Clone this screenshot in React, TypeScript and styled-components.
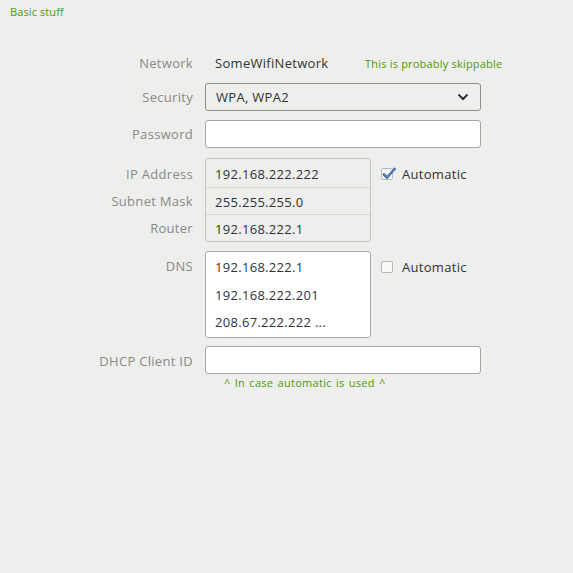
import React from 'react';
import styled, { createGlobalStyle } from 'styled-components';

const GlobalStyle = createGlobalStyle`
  html, body {
    margin: 0;
    padding: 0;
    background: #eeeeec;
  }
  body {
    font-family: "Open Sans", "Noto Sans", sans-serif;
    font-size: 13px;
    letter-spacing: 0.3px;
    color: #2e3436;
  }
`;

const Page = styled.div`
  width: 573px;
  height: 573px;
  background: #eeeeec;
  box-sizing: border-box;
  padding: 5px 10px 0;
`;

const SectionTitle = styled.div`
  font-size: 11px;
  line-height: 14px;
  letter-spacing: 0.1px;
  color: #4e9a06;
`;

const Form = styled.div`
  display: grid;
  grid-template-columns: 183px 276px;
  column-gap: 12px;
  row-gap: 9px;
  margin-top: 33px;
`;

const Label = styled.div<{ $top?: boolean }>`
  color: #888a85;
  text-align: right;
  align-self: ${(p) => (p.$top ? 'start' : 'center')};
  padding-top: ${(p) => (p.$top ? '6px' : '0')};
`;

const LabelStack = styled.div`
  display: flex;
  flex-direction: column;
  color: #888a85;
  text-align: right;
  padding-top: 4px;
`;

const StackLabel = styled.div`
  height: 27px;
  line-height: 27px;
`;

const Field = styled.div<{ $short?: boolean; $shift?: number }>`
  display: flex;
  align-items: center;
  gap: 10px;
  min-height: ${(p) => (p.$short ? '22px' : '26px')};
  margin-top: ${(p) => p.$shift ?? 0}px;
`;

const Value = styled.div`
  flex-shrink: 0;
  padding-left: 10px;
  width: 140px;
`;

const Note = styled.div`
  font-size: 11px;
  letter-spacing: 0.2px;
  color: #4e9a06;
  white-space: nowrap;
`;

const Combo = styled.div`
  flex: 1;
  height: 28px;
  box-sizing: border-box;
  border: 1px solid #8d8f8a;
  border-radius: 3px;
  background: #eeeeec;
  display: flex;
  align-items: center;
  justify-content: space-between;
  padding: 0 11px 0 10px;
`;

const Entry = styled.div`
  flex: 1;
  height: 28px;
  box-sizing: border-box;
  border: 1px solid #a5a7a2;
  border-radius: 3px;
  background: #ffffff;
`;

const Group = styled.div<{ $white?: boolean }>`
  width: 166px;
  box-sizing: border-box;
  border: 1px solid ${(p) => (p.$white ? '#a5a7a2' : '#c4c5c1')};
  border-radius: 3px;
  background: ${(p) => (p.$white ? '#ffffff' : '#eeeeec')};
  display: flex;
  flex-direction: column;
  padding: ${(p) => (p.$white ? '0 0 3px' : '0')};
`;

const GroupRow = styled.div<{ $sep?: boolean; $h: number }>`
  height: ${(p) => p.$h}px;
  line-height: ${(p) => p.$h + 2}px;
  padding-left: 9px;
  border-bottom: ${(p) => (p.$sep ? '1px solid #d6d7d3' : 'none')};
`;

const TopField = styled(Field)`
  align-items: flex-start;
`;

const Check = styled.label`
  display: flex;
  align-items: center;
  gap: 9px;
  margin-top: 7px;
  color: #2e3436;
`;

const Box = styled.span`
  width: 12px;
  height: 12px;
  box-sizing: border-box;
  border: 1px solid #b8b9b5;
  border-radius: 2px;
  background: #fafafa;
  position: relative;
  display: inline-block;
`;

const Tick = styled.svg`
  position: absolute;
  left: 0;
  top: -3px;
`;

const Hint = styled.div`
  grid-column: 2;
  margin-top: -8px;
  padding-left: 19px;
  font-size: 11px;
  color: #4e9a06;
  word-spacing: 1px;
`;

const CheckBox: React.FC<{ checked?: boolean; label: string }> = ({ checked, label }) => (
  <Check>
    <Box>
      {checked && (
        <Tick width="14" height="14" viewBox="0 0 14 14">
          <path d="M2 8.5 L5 11.5 L12.5 3" fill="none" stroke="#3465a4" strokeWidth="2.6" strokeLinecap="round" strokeLinejoin="round" />
          <path d="M2.5 8.5 L5 11 L12 3.5" fill="none" stroke="#729fcf" strokeWidth="1" strokeLinecap="round" />
        </Tick>
      )}
    </Box>
    {label}
  </Check>
);

const Chevron = () => (
  <svg width="12" height="8" viewBox="0 0 12 8">
    <path d="M1.5 1.5 L6 6 L10.5 1.5" fill="none" stroke="#2e3436" strokeWidth="2" />
  </svg>
);

export default function App() {
  return (
    <Page>
      <GlobalStyle />
      <SectionTitle>Basic stuff</SectionTitle>
      <Form>
        <Label>Network</Label>
        <Field $short>
          <Value>SomeWifiNetwork</Value>
          <Note>This is probably skippable</Note>
        </Field>

        <Label>Security</Label>
        <Field>
          <Combo>
            <span>WPA, WPA2</span>
            <Chevron />
          </Combo>
        </Field>

        <Label>Password</Label>
        <Field>
          <Entry />
        </Field>

        <LabelStack>
          <StackLabel>IP Address</StackLabel>
          <StackLabel>Subnet Mask</StackLabel>
          <StackLabel>Router</StackLabel>
        </LabelStack>
        <TopField $shift={1}>
          <Group>
            <GroupRow $sep $h={28}>192.168.222.222</GroupRow>
            <GroupRow $sep $h={26}>255.255.255.0</GroupRow>
            <GroupRow $h={26}>192.168.222.1</GroupRow>
          </Group>
          <CheckBox checked label="Automatic" />
        </TopField>

        <Label $top>DNS</Label>
        <TopField>
          <Group $white>
            <GroupRow $h={28}>192.168.222.1</GroupRow>
            <GroupRow $h={28}>192.168.222.201</GroupRow>
            <GroupRow $h={26}>208.67.222.222 ...</GroupRow>
          </Group>
          <CheckBox label="Automatic" />
        </TopField>

        <Label>DHCP Client ID</Label>
        <Field $shift={-1}>
          <Entry />
        </Field>

        <Hint>^ In case automatic is used ^</Hint>
      </Form>
    </Page>
  );
}
